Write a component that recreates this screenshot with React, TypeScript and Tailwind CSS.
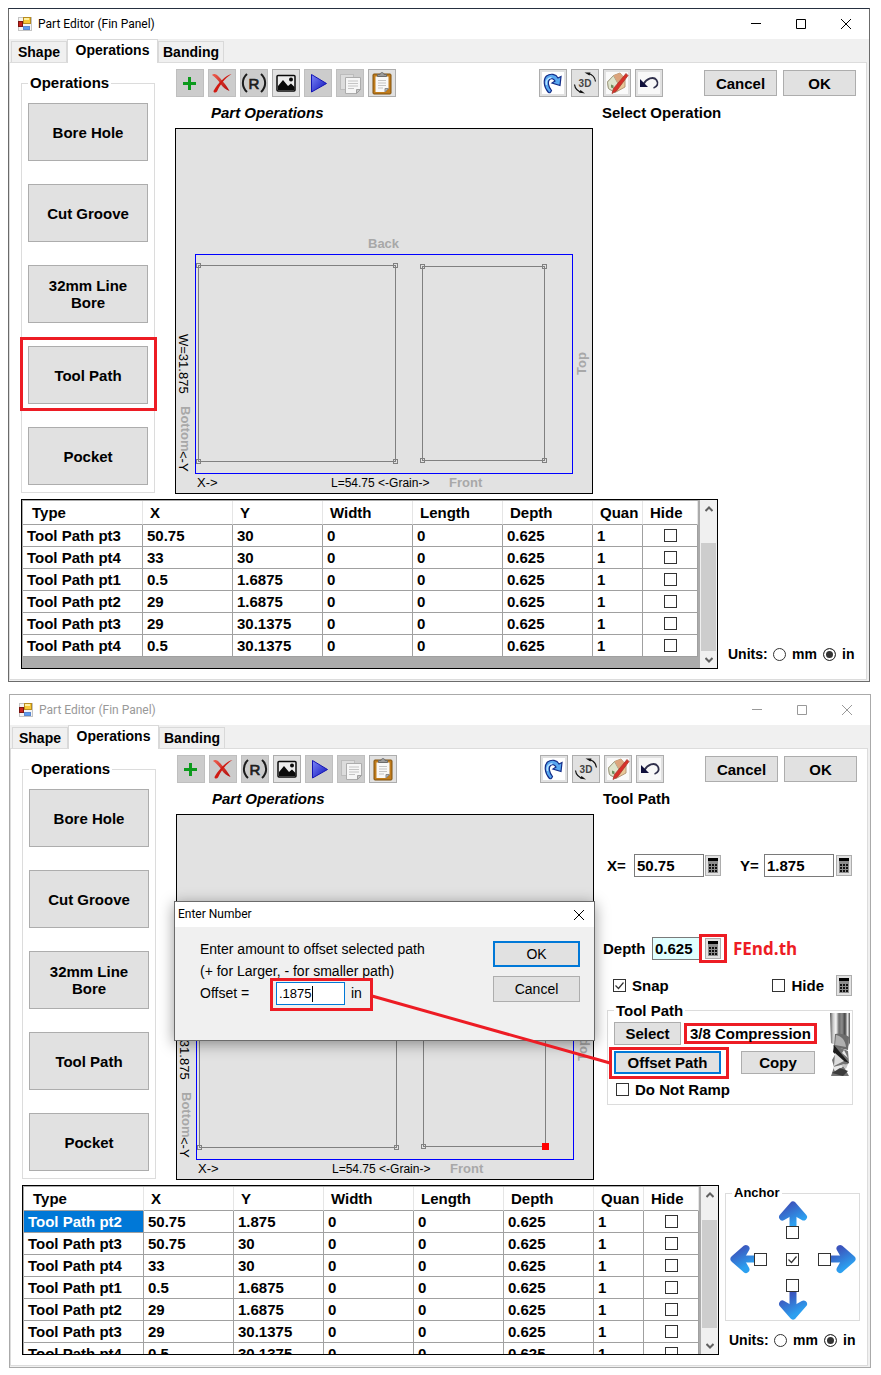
import React, { useState } from 'react';
import clsx from 'clsx';

interface Operation {
  type: string;
  x: string;
  y: string;
  depth: string;
}

interface PartWindowProps {
  id: string;
  title: string;
  active: boolean;
  rows: Operation[];
  panelTitle: string;
  highlight?: string;
  selectedRow?: number;
  thumbClass: string;
  className?: string;
  panel?: React.ReactNode;
  anchor?: React.ReactNode;
  children?: React.ReactNode;
}

const path: Operation[] = [
  { type: 'Tool Path pt3', x: '50.75', y: '30', depth: '0.625' },
  { type: 'Tool Path pt4', x: '33', y: '30', depth: '0.625' },
  { type: 'Tool Path pt1', x: '0.5', y: '1.6875', depth: '0.625' },
  { type: 'Tool Path pt2', x: '29', y: '1.6875', depth: '0.625' },
  { type: 'Tool Path pt3', x: '29', y: '30.1375', depth: '0.625' },
  { type: 'Tool Path pt4', x: '0.5', y: '30.1375', depth: '0.625' },
];

const editedPath: Operation[] = [
  { type: 'Tool Path pt2', x: '50.75', y: '1.875', depth: '0.625' },
  ...path,
];

const operations = ['Bore Hole', 'Cut Groove', '32mm Line Bore', 'Tool Path', 'Pocket'];

/* ---------- icons ---------- */

const FormIcon = () => (
  <svg width="16" height="16" viewBox="0 0 16 16" aria-hidden="true">
    <rect x="0.5" y="1.5" width="13" height="13" fill="#f4f4f4" stroke="#c4c4c4" />
    <rect x="5.5" y="1.5" width="7" height="6" fill="#f6c838" stroke="#b88c20" />
    <path d="M6 2h5v2H6z" fill="#fff0a0" />
    <rect x="0.500" y="5.500" width="4" height="5" fill="#c8221c" stroke="#7c1410" />
    <rect x="5.500" y="10.500" width="6" height="3" fill="#5c9cf0" stroke="#5c88d0" />
  </svg>
);

const PlusIcon = () => (
  <svg width="26" height="26" viewBox="0 0 26 26" aria-hidden="true">
    <path d="M12.500 7v13M6 13.500h13" stroke="#0c9a1c" strokeWidth="3" />
  </svg>
);

const DeleteIcon = () => (
  <svg width="26" height="26" viewBox="0 0 26 26" aria-hidden="true">
    <defs>
      <linearGradient id="del" x1="0" y1="0" x2="1" y2="1">
        <stop offset="0" stopColor="#f06050" />
        <stop offset="1" stopColor="#b00808" />
      </linearGradient>
    </defs>
    <path d="M3 5C4 3.500 6.500 3.500 8.500 5.500c3 3 9 9.500 12 15.500-4-1.500-6.500-3.500-8.500-6.500C9.500 10.500 6 7 3 5z" fill="url(#del)" />
    <path d="M22.500 4C17 5 9 13 4.500 21c0 2 2.500 2 3.500.5C11 15 16 8 22.500 4z" fill="#d01a12" />
  </svg>
);

const ReverseIcon = () => (
  <svg width="26" height="26" viewBox="0 0 26 26" fill="none" stroke="#1c1c1c" aria-hidden="true">
    <path d="M6 4C0.500 9 0.500 17 6 22M20 4c5.500 5 5.500 13 0 18" strokeWidth="2" />
    <text x="13" y="18.500" textAnchor="middle" fontSize="15" fontWeight="normal" fill="#1c1c1c" strokeWidth="0.7" fontFamily="Liberation Sans, sans-serif">
      R
    </text>
  </svg>
);

const PictureIcon = () => (
  <svg width="26" height="26" viewBox="0 0 26 26" aria-hidden="true">
    <rect x="4" y="5.500" width="18" height="15.500" rx="1" fill="#ececec" stroke="#0a0a0a" strokeWidth="1.500" />
    <path d="M5 20v-4l5-6 5 6 3-2.500 3.500 3.500v3z" fill="#0a0a0a" />
    <circle cx="18" cy="9.500" r="2" fill="#0a0a0a" />
  </svg>
);

const PlayIcon = () => (
  <svg width="26" height="26" viewBox="0 0 26 26" aria-hidden="true">
    <defs>
      <linearGradient id="play" x1="0" y1="0" x2="1" y2="1">
        <stop offset="0" stopColor="#7c86f8" />
        <stop offset="1" stopColor="#0c10b8" />
      </linearGradient>
    </defs>
    <path d="M6.500 4.500l15 9-15 8.500z" fill="url(#play)" stroke="#1414b4" strokeLinejoin="round" />
  </svg>
);

const CopyIcon = () => (
  <svg width="26" height="26" viewBox="0 0 26 26" aria-hidden="true">
    <rect x="3.500" y="4.500" width="13" height="15" fill="#dcdcdc" stroke="#bcbcbc" />
    <path d="M8.500 7.500h15v12l-4 4h-11z" fill="#f6f6f6" stroke="#acacac" />
    <path d="M11 11h10M11 13.500h10M11 16h10M11 18.500h6" stroke="#c4c4c4" />
    <path d="M23.500 19.500h-4v4z" fill="#c4c4c4" stroke="#a0a0a0" />
  </svg>
);

const PasteIcon = () => (
  <svg width="26" height="26" viewBox="0 0 26 26" aria-hidden="true">
    <rect x="4" y="4" width="18" height="20" rx="1" fill="#c07c1c" stroke="#80500c" />
    <path d="M6.500 6.500h13v12l-3.500 3.500H6.500z" fill="#f8f8f8" />
    <path d="M9 10.500h8M9 13h8M9 15.500h8M9 18h5" stroke="#c4c4c4" />
    <path d="M19.500 18.500H16V22z" fill="#b8b8b8" stroke="#8c8c8c" />
    <path d="M8.500 6.500v-2h2.500c0-2.500 4-2.500 4 0h2.500v2z" fill="#9c9c9c" stroke="#6c6c6c" />
  </svg>
);

const RotateIcon = () => (
  <svg width="26" height="26" viewBox="0 0 26 26" aria-hidden="true">
    <rect x="2" y="2" width="22" height="22" fill="#fff" />
    <path
      d="M8.500 22.500C3.500 17 3 9.500 6.500 6c4-3 9.500-2 11.500 2l3-1.500-1 9-8-2.500 3-2c-1.500-2.500-4-3-5.500-1.500-2 2-1.500 6.500 2 11-1 2.500-2 2.500-3 2z"
      fill="#58a8f0"
      stroke="#142c88"
      strokeWidth="1.200"
    />
    <path d="M6.500 15c-1-4 1-7 5-7.500" fill="none" stroke="#b8e0ff" strokeWidth="1.500" />
  </svg>
);

const View3DIcon = () => (
  <svg width="26" height="26" viewBox="0 0 26 26" aria-hidden="true">
    <text x="13" y="17" textAnchor="middle" fontSize="10" fontWeight="bold" fill="#444" fontFamily="Liberation Sans, sans-serif">
      3D
    </text>
    <g fill="none" stroke="#111" strokeWidth="1.200">
      <path d="M16 3.500c4.500 1 7 4 7.500 8" />
      <path d="M2.500 14.500c.5 4 3 7 8 8" />
    </g>
    <path d="M12.500 2.500l6 0-1 3zM13 23.500l-6-1 1.500-2.500z" fill="#111" />
  </svg>
);

const HouseIcon = () => (
  <svg width="26" height="26" viewBox="0 0 26 26" aria-hidden="true">
    <rect x="2" y="2" width="22" height="22" fill="#fafafa" />
    <path d="M3.500 12l6-6.500L16 3l5 6v8l-10 5.500-6.500-4z" fill="#e8c898" stroke="#b49878" />
    <path d="M3.500 12l6-6.500 5 9-3.500 8-6.500-4z" fill="#dfe4cc" stroke="#a0a088" />
    <path d="M9.500 5.500L16 3l5 6-6.500 5z" fill="#dca47c" />
    <path d="M7 14.500l2.500 1v3l-2.500-1z" fill="#6c8c5c" />
    <path d="M22 3.500l2 2L12.500 21l-4.500 2.500 1.500-5z" fill="#d83028" stroke="#a83830" strokeWidth="0.800" />
  </svg>
);

const UndoIcon = () => (
  <svg width="26" height="26" viewBox="0 0 26 26" aria-hidden="true">
    <rect x="2" y="2" width="22" height="22" fill="#f8f8f8" />
    <path d="M7.500 14c3-5.500 10-8 13-4 2.500 3.500.5 7-3 8" fill="none" stroke="#30304c" strokeWidth="1.800" />
    <path d="M4 9v8h8z" fill="#10103c" />
  </svg>
);

const CalcButton = ({ label }: { label: string }) => (
  <button type="button" aria-label={label} className="flex h-[21px] w-4 items-center justify-center border border-[#adadad] bg-[#e1e1e1]">
    <svg width="10" height="17" viewBox="0 0 10 17" aria-hidden="true">
      <rect y="1" width="10" height="15" fill="#8c8c8c" />
      <rect y="1" width="10" height="3" fill="#000" />
      <path d="M1 8h8M1 11h8M1 14h8" stroke="#111" strokeWidth="2" strokeDasharray="2 1" />
    </svg>
  </button>
);

const DrillBit = () => (
  <svg width="20" height="64" viewBox="0 0 20 64" aria-hidden="true">
    <defs>
      <linearGradient id="shank" x1="0" x2="1" y1="0" y2="0">
        <stop offset="0" stopColor="#555" />
        <stop offset="0.150" stopColor="#c8c8c8" />
        <stop offset="0.300" stopColor="#f8f8f8" />
        <stop offset="0.450" stopColor="#6c6c6c" />
        <stop offset="0.600" stopColor="#8c8c8c" />
        <stop offset="0.750" stopColor="#444" />
        <stop offset="0.880" stopColor="#e4e4e4" />
        <stop offset="1" stopColor="#4c4c4c" />
      </linearGradient>
    </defs>
    <path d="M0 0h20v30l-3 5-12-3-4-2z" fill="url(#shank)" />
    <path d="M5 21c5-1 11 0 14 3l-1 13-14-3z" fill="#6c6c6c" />
    <path d="M6 22c5 1 9 4 10 12L5 32z" fill="#b0b0b0" />
    <path d="M3 32l15 6 1 12-5 4 5 9H1l3-9-2-7 4-7z" fill="#747474" />
    <path d="M4 32l15 18-8-3-8-8z" fill="#1c1c1c" />
    <path d="M5 40l9 8-10 5z" fill="#dcdcdc" />
    <path d="M14 37l4 8-6-5zM3 54l12-3-9 10z" fill="#e8e8e8" />
    <path d="M2 60l8-5 8 3-5 5z" fill="#3c3c3c" />
    <path d="M11 52l7-1-2 5z" fill="#c4c4c4" />
  </svg>
);

const Arrow = ({ dir }: { dir: 'up' | 'down' | 'left' | 'right' }) => {
  const shapes = {
    up: { w: 30, h: 25, head: 'M4.500 16L15 4l10.500 12-10.500-6z', shaft: 'M15 6v21' },
    down: { w: 30, h: 28, head: 'M4.500 12L15 24l10.500-12-10.500 6z', shaft: 'M15-2v24' },
    left: { w: 24, h: 30, head: 'M16 4.500L4 15l12 10.500-6-10.500z', shaft: 'M6 15h20' },
    right: { w: 25, h: 30, head: 'M9 4.500L21 15 9 25.500l6-10.500z', shaft: 'M-2 15h21' },
  };
  const { w, h, head, shaft } = shapes[dir];
  return (
    <svg width={w} height={h} viewBox={`0 0 ${w} ${h}`} aria-hidden="true">
      <defs>
        <linearGradient id={`arrow-${dir}`} gradientUnits="userSpaceOnUse" x1="8" y1="4" x2="18" y2="22">
          <stop offset="0" stopColor="#3c54bc" />
          <stop offset="1" stopColor="#2ca0f0" />
        </linearGradient>
      </defs>
      <path d={shaft} stroke={`url(#arrow-${dir})`} strokeWidth="7" />
      <path d={head} fill={`url(#arrow-${dir})`} stroke={`url(#arrow-${dir})`} strokeWidth="7" strokeLinejoin="round" />
    </svg>
  );
};

/* ---------- controls ---------- */

const CheckBox = ({ id, label, checked = false }: { id?: string; label?: string; checked?: boolean }) => (
  <span className="relative block size-[13px] shrink-0">
    <input
      id={id}
      type="checkbox"
      aria-label={label}
      defaultChecked={checked}
      className="peer block size-[13px] appearance-none border border-[#333] bg-white"
    />
    <svg
      viewBox="0 0 13 13"
      className="pointer-events-none absolute inset-0 hidden size-[13px] peer-checked:block"
      aria-hidden="true"
    >
      <path d="M2.500 6.500l3 3 5-6" fill="none" stroke="#333" strokeWidth="1.200" />
    </svg>
  </span>
);

const Radio = ({ name, id, value, checked }: { name: string; id: string; value: string; checked?: boolean }) => (
  <input
    type="radio"
    id={id}
    name={name}
    value={value}
    defaultChecked={checked}
    className="size-[13px] appearance-none rounded-full border border-[#333] bg-white checked:bg-[#333] checked:shadow-[inset_0_0_0_2px_white]"
  />
);

const PushButton = ({ children, className }: { children: React.ReactNode; className: string }) => (
  <button type="button" className={clsx('bg-[#e1e1e1] text-center', className)}>
    {children}
  </button>
);

const ToolButton = ({ label, dim, children }: { label: string; dim?: boolean; children: React.ReactNode }) => (
  <button
    type="button"
    aria-label={label}
    className={clsx('size-7 border', dim ? 'border-[#bfbfbf] bg-[#ccc]' : 'border-[#adadad] bg-[#e1e1e1]')}
  >
    {children}
  </button>
);

const WindowButtons = () => (
  <div className="flex h-full">
    <button type="button" aria-label="Minimize" className="flex w-[46px] items-center justify-center">
      <svg width="10" height="10" viewBox="0 0 10 10" stroke="currentColor"><path d="M0 4.500h10" /></svg>
    </button>
    <button type="button" aria-label="Maximize" className="flex w-11 items-center justify-center">
      <svg width="10" height="10" viewBox="0 0 10 10" stroke="currentColor" fill="none"><path d="M.5.5h9v9h-9z" /></svg>
    </button>
    <button type="button" aria-label="Close" className="flex w-[46px] items-center justify-center">
      <svg width="10" height="10" viewBox="0 0 10 10" stroke="currentColor"><path d="M0 0l10 10M10 0L0 10" /></svg>
    </button>
  </div>
);

/* ---------- part drawing ---------- */

const Handle = ({ x, y }: { x: number; y: number }) => (
  <rect x={x - 2} y={y - 2} width="4" height="4" fill="none" stroke="#808080" />
);

const PartDrawing = ({ selected }: { selected: boolean }) => (
  <div className="border border-black bg-[#e2e2e2]">
    <svg
      viewBox="0 0 416 364"
      className="block w-full"
      fontFamily="Liberation Sans, Arial, sans-serif"
      fontSize="13"
      fontWeight="normal"
    >
      <rect x="19.500" y="125.500" width="377" height="219" fill="none" stroke="#0000ff" />
      <rect x="22.500" y="136.500" width="197" height="196" fill="none" stroke="#808080" />
      <rect x="246.500" y="137.500" width="122" height="194" fill="none" stroke="#808080" />
      <Handle x={22.5} y={136.5} />
      <Handle x={219.5} y={136.5} />
      <Handle x={22.5} y={332.5} />
      <Handle x={219.5} y={332.5} />
      <Handle x={246.5} y={137.5} />
      <Handle x={368.5} y={137.5} />
      <Handle x={246.5} y={331.5} />
      {selected ? <rect x="365" y="328" width="7" height="7" fill="#ff0000" /> : <Handle x={368.5} y={331.5} />}
      <g fill="#a8a8a8" fontWeight="bold">
        <text x="192" y="119">Back</text>
        <text x="273" y="358">Front</text>
        <text transform="translate(5 277) rotate(90)">Bottom</text>
        <text transform="translate(410 246) rotate(-90)">Top</text>
      </g>
      <text x="21" y="358">X-&gt;</text>
      <text x="155" y="358" fontSize="12">L=54.75 &lt;-Grain-&gt;</text>
      <text transform="translate(3 205) rotate(90)">W=31.875</text>
      <text transform="translate(3 322) rotate(90)">&lt;-Y</text>
    </svg>
  </div>
);

/* ---------- operations table ---------- */

const headers = ['Type', 'X', 'Y', 'Width', 'Length', 'Depth', 'Quan', 'Hide'];

const OperationsTable = ({ rows, selectedRow, thumbClass }: { rows: Operation[]; selectedRow?: number; thumbClass: string }) => (
  <div className="flex h-[170px] flex-1 overflow-hidden border border-black bg-[#ababab]">
    <div className="flex-1 overflow-hidden pt-px pr-0.5 pl-px">
      <table className="w-full table-fixed border-separate border-spacing-0 bg-white text-left leading-[21px]">
        <colgroup>
          <col className="w-[120px]" />
          <col className="w-[90px]" />
          <col className="w-[90px]" />
          <col className="w-[90px]" />
          <col className="w-[90px]" />
          <col className="w-[90px]" />
          <col className="w-[50px]" />
          <col className="w-[55px]" />
        </colgroup>
        <thead>
          <tr>
            {headers.map((h) => (
              <th key={h} className="h-6 border-r border-b border-r-[#e5e5e5] border-b-[#a0a0a0] pl-[7px] first:pl-[9px]">
                {h}
              </th>
            ))}
          </tr>
        </thead>
        <tbody>
          {rows.map((row, i) => (
            <tr key={i}>
              {[row.type, row.x, row.y, '0', '0', row.depth, '1'].map((value, col) => (
                <td
                  key={col}
                  className={clsx(
                    'h-[22px] border-r border-b border-[#a0a0a0] pl-1',
                    i === selectedRow && col === 0 && 'bg-[#0078d7] text-white'
                  )}
                >
                  {value}
                </td>
              ))}
              <td className="h-[22px] border-r border-b border-[#a0a0a0]">
                <div className="flex justify-center">
                  <CheckBox label={`Hide row ${i + 1}`} />
                </div>
              </td>
            </tr>
          ))}
        </tbody>
      </table>
    </div>
    <div className="flex w-[17px] flex-col bg-[#f0f0f0] text-[#606060]">
      <button type="button" aria-label="Scroll up" className="flex h-[17px] w-full items-center justify-center">
        <svg width="8" height="6" viewBox="0 0 8 6"><path d="M.5 5L4 1.500 7.500 5" fill="none" stroke="currentColor" strokeWidth="2" /></svg>
      </button>
      <div className={clsx('h-[108px] w-[15px] self-center bg-[#cdcdcd]', thumbClass)} />
      <button type="button" aria-label="Scroll down" className="mt-auto flex h-[17px] w-full items-center justify-center">
        <svg width="8" height="6" viewBox="0 0 8 6"><path d="M.5 1L4 4.500 7.500 1" fill="none" stroke="currentColor" strokeWidth="2" /></svg>
      </button>
    </div>
  </div>
);

const tabs = [
  { name: 'Shape', width: 'w-14' },
  { name: 'Operations', width: 'w-[91px]' },
  { name: 'Banding', width: 'w-[66px]' },
];

/* ---------- window ---------- */

const PartWindow: React.FC<PartWindowProps> = ({
  id,
  title,
  active,
  rows,
  panelTitle,
  highlight,
  selectedRow,
  thumbClass,
  className,
  panel,
  anchor,
  children,
}) => {
  const [tab, setTab] = useState('Operations');

  return (
    <section
      className={clsx(
        'relative border bg-[#f0f0f0]',
        active ? 'border-[#6b6b6b] border-t-[#263040]' : 'border-[#aaa]',
        className
      )}
    >
      <header className={clsx('flex h-[30px] items-center bg-white pl-[9px]', active ? 'text-black' : 'text-[#999]')}>
        <FormIcon />
        <h1 className="ml-1 flex-1 font-['Roboto',sans-serif] text-[12px] font-normal">{title}</h1>
        <WindowButtons />
      </header>

      <div className="flex h-[23px] items-end pl-0.5 text-[14px]" role="tablist">
        {tabs.map((t) => (
          <button
            key={t.name}
            type="button"
            role="tab"
            aria-selected={tab === t.name}
            onClick={() => setTab(t.name)}
            className={clsx(
              'border border-b-0 border-[#d9d9d9] font-bold',
              t.width,
              tab === t.name ? 'relative -mb-px h-6 bg-white pb-0.5' : 'h-[21px]'
            )}
          >
            {t.name}
          </button>
        ))}
      </div>

      <main className="mr-0.5 mb-px border border-[#dcdcdc] bg-white pb-[10px] pl-[11px]">
        <div className="flex gap-5">
          <fieldset className="mt-3 w-[134px] self-start border border-[#dcdcdc] px-1.5 pt-3 pb-[7px]">
            <legend className="px-0.5 leading-4">Operations</legend>
            <div className="flex flex-col gap-[23px]">
              {operations.map((op) => (
                <div key={op} className="relative h-[58px]">
                  <PushButton className="h-full w-full border border-[#adadad] px-3">{op}</PushButton>
                  {op === highlight && (
                    <div className="pointer-events-none absolute -top-[9px] -right-[9px] -bottom-[7px] -left-2 border-3 border-[#ed1c24]" />
                  )}
                </div>
              ))}
            </div>
          </fieldset>

          <div className="flex flex-1 flex-col pt-1.5">
            <div className="flex items-center pr-[10px] pl-px">
              <div className="flex gap-1">
                <ToolButton label="Add" dim><PlusIcon /></ToolButton>
                <ToolButton label="Delete" dim><DeleteIcon /></ToolButton>
                <ToolButton label="Reverse" dim><ReverseIcon /></ToolButton>
                <ToolButton label="Picture"><PictureIcon /></ToolButton>
                <ToolButton label="Run" dim><PlayIcon /></ToolButton>
                <ToolButton label="Copy" dim><CopyIcon /></ToolButton>
                <ToolButton label="Paste"><PasteIcon /></ToolButton>
              </div>
              <div className="ml-auto flex gap-1">
                <ToolButton label="Rotate"><RotateIcon /></ToolButton>
                <ToolButton label="3D view"><View3DIcon /></ToolButton>
                <ToolButton label="Edit room"><HouseIcon /></ToolButton>
                <ToolButton label="Undo"><UndoIcon /></ToolButton>
              </div>
              <div className="ml-[41px] flex gap-1.5">
                <PushButton className="h-[26px] w-[73px] border border-[#adadad]">Cancel</PushButton>
                <PushButton className="h-[26px] w-[73px] border border-[#adadad]">OK</PushButton>
              </div>
            </div>
            <div className="flex">
              <div className="flex-1">
                <h2 className="pl-9 leading-[31px] italic">Part Operations</h2>
                <PartDrawing selected={selectedRow !== undefined} />
              </div>
              <div className="w-[273px] pl-[9px]">
                <h2 className="leading-[31px]">{panelTitle}</h2>
                {panel}
              </div>
            </div>
          </div>
        </div>

        <div className="mt-[5px] flex pr-[7px]">
          <OperationsTable rows={rows} selectedRow={selectedRow} thumbClass={thumbClass} />
          <aside className="ml-1.5 flex w-[135px] flex-col pt-px pb-1.5">
            {anchor}
            <div className="mt-auto flex items-center pl-1 text-[14px] leading-[17px]" role="radiogroup" aria-label="Units">
              <span className="w-[45px]">Units:</span>
              <Radio name={`${id}-units`} id={`${id}-mm`} value="mm" />
              <label htmlFor={`${id}-mm`} className="w-[37px] pl-1.5">mm</label>
              <Radio name={`${id}-units`} id={`${id}-in`} value="in" checked />
              <label htmlFor={`${id}-in`} className="pl-1.5">in</label>
            </div>
          </aside>
        </div>
      </main>
      {children}
    </section>
  );
};

const ToolPathPanel = () => (
  <div>
    <div className="mt-[39px] flex h-6 items-center pl-1">
      <label htmlFor="pos-x" className="w-[27px]">X=</label>
      <input id="pos-x" defaultValue="50.75" className="h-[23px] w-[70px] border border-[#7a7a7a] px-0.5" />
      <div className="ml-px"><CalcButton label="Calculate X" /></div>
      <label htmlFor="pos-y" className="ml-[19px] w-6">Y=</label>
      <input id="pos-y" defaultValue="1.875" className="h-[23px] w-[70px] border border-[#7a7a7a] px-0.5" />
      <div className="ml-0.5"><CalcButton label="Calculate Y" /></div>
    </div>

    <div className="mt-[59px] flex h-6 items-center">
      <label htmlFor="depth" className="w-[49px]">Depth</label>
      <input id="depth" defaultValue="0.625" className="h-[23px] w-[50px] border border-[#7a7a7a] bg-[#e0ffff] px-0.5" />
      <div className="relative ml-[3px]">
        <CalcButton label="Calculate depth" />
        <div className="pointer-events-none absolute -inset-x-1.5 -inset-y-1 border-3 border-[#ed1c24]" />
      </div>
      <span className="ml-3 font-['Open_Sans',sans-serif] text-[17px] text-[#ed1c24]">FEnd.th</span>
    </div>

    <div className="mt-[15px] flex h-[21px] items-center pl-[10px]">
      <CheckBox id="snap" checked />
      <label htmlFor="snap" className="pl-1.5">Snap</label>
      <div className="mr-[15px] ml-auto flex items-center">
        <CheckBox id="hide" />
        <label htmlFor="hide" className="mr-3 pl-1.5">Hide</label>
        <CalcButton label="Calculate hide" />
      </div>
    </div>

    <fieldset className="mt-1.5 mr-[14px] ml-1 border border-[#dcdcdc] pl-1.5">
      <legend className="px-0.5 leading-[17px]">Tool Path</legend>
      <div className="flex">
        <div className="flex-1 pt-[3px] pb-1.5">
          <div className="flex items-center gap-[3px]">
            <PushButton className="h-[23px] w-[67px] border border-[#adadad]">Select</PushButton>
            <span className="border-3 border-[#ed1c24] px-[3px] leading-[15px] whitespace-nowrap">3/8 Compression</span>
          </div>
          <div className="mt-1.5 flex gap-5">
            <div className="relative">
              <PushButton className="h-[23px] w-[107px] border-2 border-[#0078d7]">Offset Path</PushButton>
              <div className="pointer-events-none absolute -top-1 -right-2 -bottom-[5px] -left-[5px] border-3 border-[#ed1c24]" />
            </div>
            <PushButton className="h-[23px] w-[74px] border border-[#adadad]">Copy</PushButton>
          </div>
          <div className="mt-[7px] flex items-center pl-0.5 leading-[17px]">
            <CheckBox id="ramp" />
            <label htmlFor="ramp" className="pl-1.5">Do Not Ramp</label>
          </div>
        </div>
        <div className="-mt-1.5 mr-0.5"><DrillBit /></div>
      </div>
    </fieldset>
  </div>
);

const AnchorPicker = () => (
  <fieldset className="border border-[#dcdcdc] pt-px">
    <legend className="ml-[6px] px-0.5 text-[13px] leading-[14px]">Anchor</legend>
    <div className="flex flex-col items-center">
      <Arrow dir="up" />
      <CheckBox label="Anchor top" />
      <div className="my-[5px] flex items-center">
        <Arrow dir="left" />
        <CheckBox label="Anchor left" />
        <div className="mx-[19px]"><CheckBox label="Anchor centre" checked /></div>
        <CheckBox label="Anchor right" />
        <Arrow dir="right" />
      </div>
      <CheckBox label="Anchor bottom" />
      <Arrow dir="down" />
    </div>
  </fieldset>
);

const OffsetDialog = () => (
  <div
    role="dialog"
    aria-label="Enter Number"
    className="absolute top-[206px] left-[164px] w-[421px] border border-[#6b6b6b] bg-[#f0f0f0] text-[14px] font-normal shadow-[0_3px_14px_rgba(0,0,0,0.4)]"
  >
    <div className="flex h-[25px] items-center bg-white pl-[3px]">
      <h2 className="flex-1 font-['Roboto',sans-serif] text-[12px] font-normal">Enter Number</h2>
      <button type="button" aria-label="Close" className="flex h-full w-[31px] items-center justify-center">
        <svg width="10" height="10" viewBox="0 0 10 10" stroke="currentColor"><path d="M0 0l10 10M10 0L0 10" /></svg>
      </button>
    </div>
    <div className="flex justify-between pt-[11px] pr-[14px] pb-[35px] pl-[25px] leading-[22px]">
      <div>
        <p>Enter amount to offset selected path</p>
        <p>(+ for Larger, - for smaller path)</p>
        <div className="flex">
          <label htmlFor="offset" className="w-[76px]">Offset =</label>
          <div className="relative flex">
            <input id="offset" defaultValue=".1875" className="h-[23px] w-[69px] border border-[#0078d7] bg-white px-0.5 text-[13px]" />
            <span className="absolute top-1 left-9 h-4 w-px bg-black" />
            <span className="pl-1.5">in</span>
            <div className="pointer-events-none absolute -top-1 -right-[11px] -bottom-1.5 -left-1.5 border-3 border-[#ed1c24]" />
          </div>
        </div>
      </div>
      <div className="mt-[3px] flex flex-col gap-[9px]">
        <PushButton className="h-[26px] w-[87px] border-2 border-[#0078d7]">OK</PushButton>
        <PushButton className="h-[26px] w-[87px] border border-[#adadad]">Cancel</PushButton>
      </div>
    </div>
  </div>
);

const App = () => (
  <div className="min-h-screen bg-white pt-2 font-['Liberation_Sans',Arial,sans-serif] text-[15px] leading-[17px] font-bold text-black">
    <PartWindow
      id="before"
      title="Part Editor (Fin Panel)"
      active
      rows={path}
      panelTitle="Select Operation"
      highlight="Tool Path"
      thumbClass="mt-[26px]"
      className="mr-[11px] ml-2"
    />
    <PartWindow
      id="after"
      title="Part Editor (Fin Panel)"
      active={false}
      rows={editedPath}
      panelTitle="Tool Path"
      selectedRow={0}
      thumbClass="mt-[17px]"
      className="mt-3 mr-[10px] ml-[9px]"
      panel={<ToolPathPanel />}
      anchor={<AnchorPicker />}
    >
      <OffsetDialog />
      {/* connector from the offset value to the Offset Path button */}
      <svg width="240" height="72" viewBox="0 0 240 72" className="pointer-events-none absolute top-[299px] left-[361px]" aria-hidden="true">
        <path d="M1 2l238 67" stroke="#ed1c24" strokeWidth="3" />
      </svg>
    </PartWindow>
  </div>
);

export default App;
